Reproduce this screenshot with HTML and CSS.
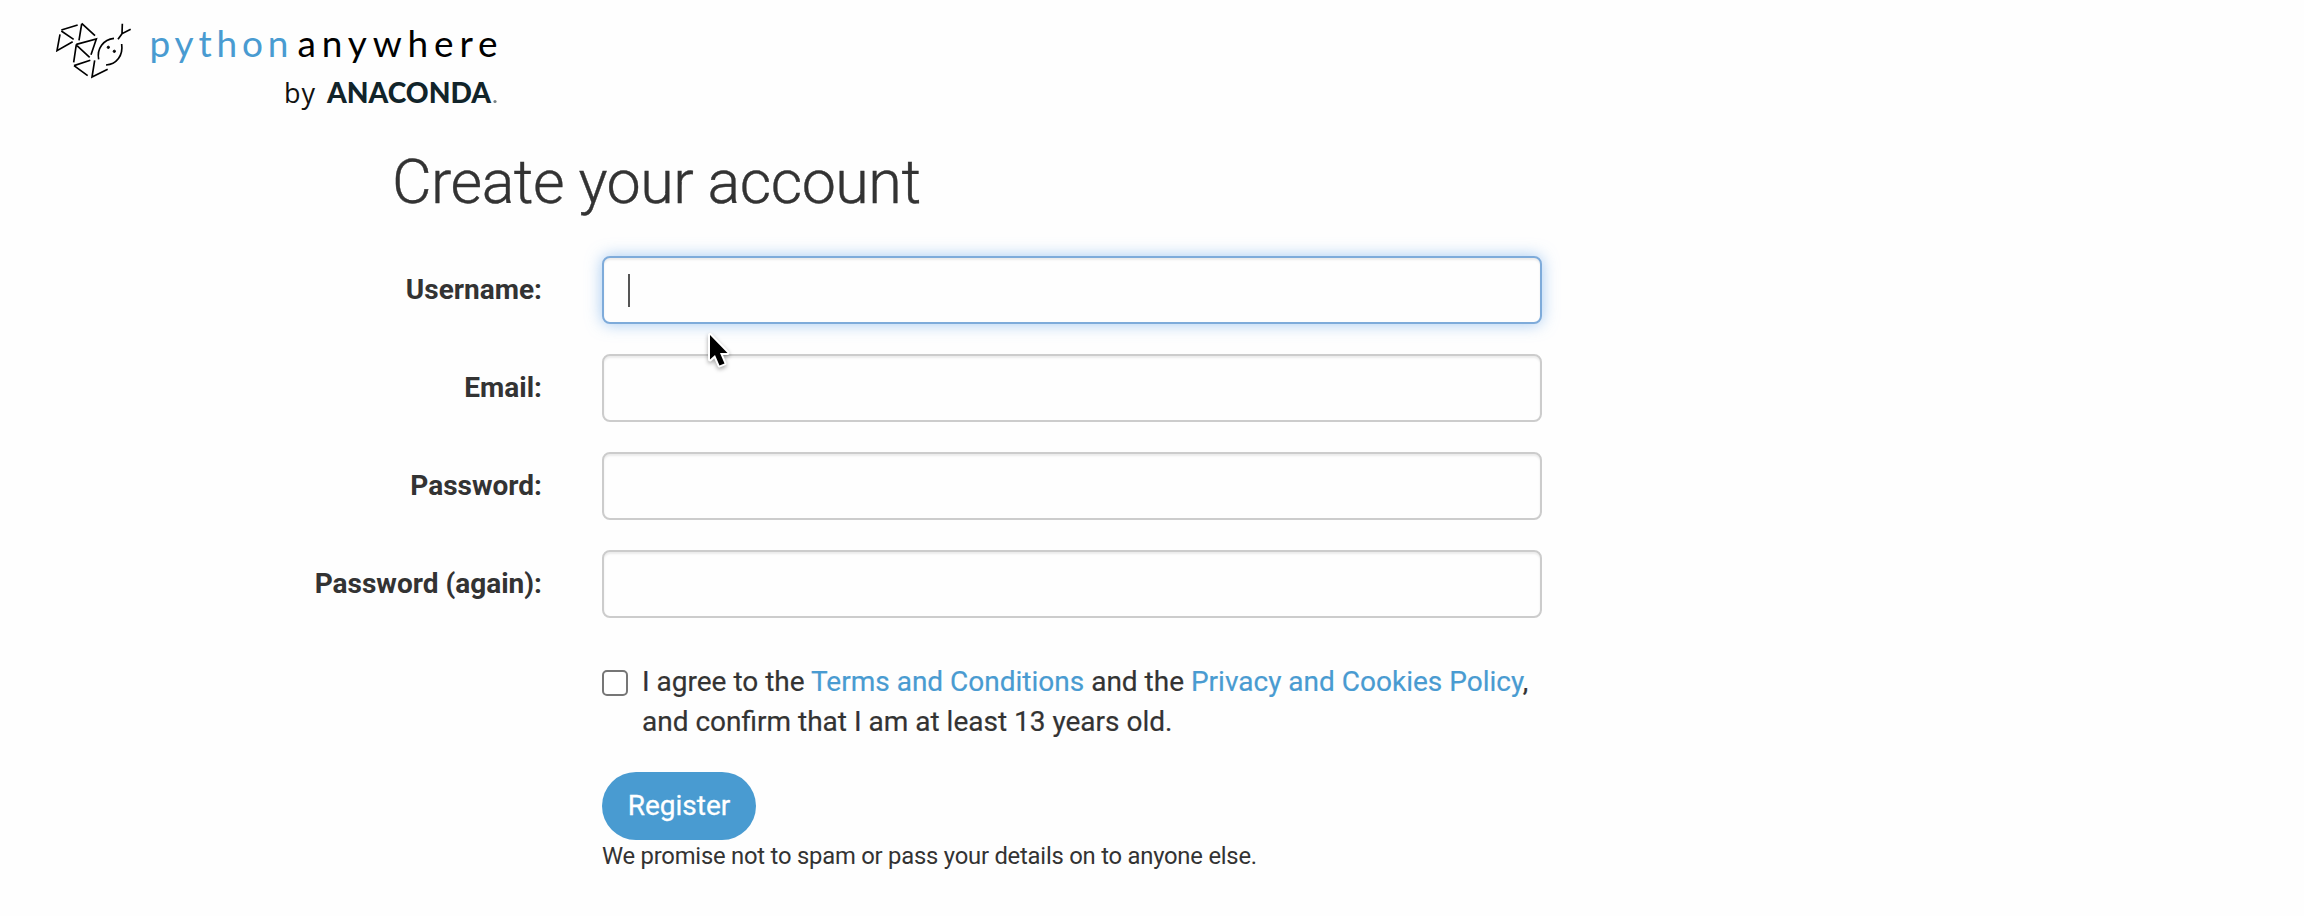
FILE: index.html
```html
<!DOCTYPE html>
<html lang="en">
<head>
<meta charset="utf-8">
<title>Create your account</title>
<link rel="stylesheet" href="styles.css">
</head>
<body>
<header class="header">
  <svg class="logo" width="460" height="110" viewBox="40 10 460 110" role="img" aria-label="PythonAnywhere by Anaconda">
    <g class="logo-mark" transform="translate(40 10) scale(.33333)">
      <path d="M64 60 113 45M64 63 101 88M60 73 51 122 98 95M125 40 165 77M125 42 117 91M109 103 169 87 153 134M109 103 101 157M111 107 149 142M102 167 151 151M102 167 143 197M164 151 156 201 203 178"/>
      <path d="M176 148C170 116 190 88 222 85M245 102C250 136 230 163 198 165M247 41 246 71 272 58M246 71 234 88"/>
      <circle cx="205" cy="112" r="3.5"/><circle cx="223" cy="124" r="3.5"/>
    </g>
    <text class="logo-python" x="149.500" y="57" textLength="139">python</text>
    <text class="logo-anywhere" x="297.500" y="57" textLength="200">anywhere</text>
    <text class="logo-by" x="284" y="103" textLength="31">by</text>
    <text class="logo-anaconda" x="327" y="103" textLength="164" lengthAdjust="spacingAndGlyphs">ANACONDA</text>
    <circle class="logo-dot" cx="495" cy="101.500" r="1.6"/>
  </svg>
</header>
<main class="main">
  <h1 class="title">Create your account</h1>
  <form class="form">
    <label class="label" for="username">Username:</label>
    <div class="field"><input class="input input-active" id="username" type="text"><span class="caret"></span>
      <svg class="pointer" width="26" height="40" viewBox="0 0 26 40"><path d="M4 4V28.500L9 24 13.500 34.500 18.500 32.500 14 22H21.500Z"/></svg>
    </div>
    <label class="label" for="email">Email:</label>
    <input class="input" id="email" type="email">
    <label class="label" for="password1">Password:</label>
    <input class="input" id="password1" type="password">
    <label class="label" for="password2">Password (again):</label>
    <input class="input" id="password2" type="password">
    <div class="actions">
      <div class="agree">
        <input class="checkbox" id="tos" type="checkbox">
        <label for="tos">I agree to the <a class="link">Terms and Conditions</a> and the <a class="link">Privacy and Cookies Policy</a>,<br>and confirm that I am at least 13 years old.</label>
      </div>
      <button class="button" type="button">Register</button>
      <p class="note">We promise not to spam or pass your details on to anyone else.</p>
    </div>
  </form>
</main>
</body>
</html>
```
FILE: styles.css
```css
* { box-sizing: border-box; }
body { margin: 0; background: #fefefe; color: #333; font: 28px/40px Roboto, sans-serif; overflow: hidden; }
.header { padding: 10px 0 0 40px; height: 120px; }
.logo { display: block; font-family: Lato, sans-serif; }
.logo-mark { fill: none; stroke: #000; stroke-width: 5; }
.logo-mark circle { fill: #000; stroke-width: 3; }
.logo-python { font-size: 37px; font-weight: 400; fill: #499bd1; }
.logo-anywhere { font-size: 37px; font-weight: 400; fill: #000; }
.logo-by { font-family: "Open Sans", sans-serif; font-size: 27px; fill: #111; }
.logo-anaconda { font-size: 28px; font-weight: 900; fill: #11242a; }
.logo-dot { fill: #778184; }
.main { padding: 26px 0 0 302px; }
.title { margin: 0 0 38px 90px; font-size: 61px; line-height: 72px; font-weight: 300; letter-spacing: -.5px; -webkit-text-stroke: .4px #333; }
.form { display: grid; grid-template-columns: 240px 940px; column-gap: 60px; row-gap: 30px; align-items: center; }
.label { text-align: right; font-weight: 700; white-space: nowrap; justify-self: end; }
.field { position: relative; height: 68px; }
.input { display: block; width: 100%; height: 68px; margin: 0; padding: 12px 24px; border: 2px solid #ccc; border-radius: 8px; background: #fefefe; box-shadow: inset 0 2px 2px rgba(0,0,0,.075); font: inherit; outline: 0; }
.input-active { border-color: #7eabda; box-shadow: inset 0 2px 2px rgba(0,0,0,.075), 0 0 16px rgba(102,165,233,.6); }
.caret { position: absolute; left: 26px; top: 18px; width: 2px; height: 33px; background: #555; }
.pointer { position: absolute; left: 104px; top: 75px; z-index: 1; overflow: visible; filter: drop-shadow(0 2px 2px rgba(0,0,0,.35)); }
.pointer path { fill: #000; stroke: #fff; stroke-width: 4; paint-order: stroke; stroke-linejoin: round; }
.actions { grid-column: 2; display: flex; flex-direction: column; align-items: flex-start; padding-top: 14px; }
.agree { display: flex; gap: 14px; white-space: nowrap; -webkit-text-stroke: .2px; }
.checkbox { appearance: none; width: 26px; height: 26px; margin: 8px 0 0; border: 2px solid #767676; border-radius: 5px; background: #fff; }
.link { color: #499bd1; }
.button { height: 68px; width: 154px; margin: 30px 0 0; padding: 0; border: 0; border-radius: 34px; background: #499bd1; color: #fff; font: inherit; -webkit-text-stroke: .3px; }
.note { margin: 0; font-size: 23.8px; line-height: 32px; letter-spacing: -.22px; }
```
